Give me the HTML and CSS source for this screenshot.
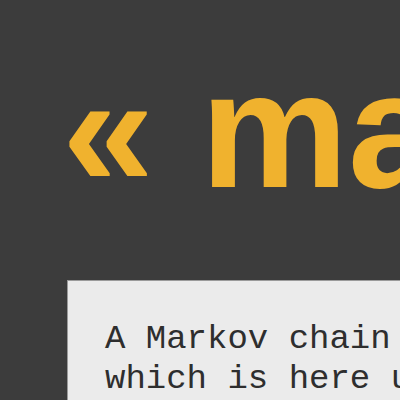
FILE: index.html
```html
<!DOCTYPE html>
<html lang="en">
<head>
<meta charset="utf-8">
<title>markov</title>
<link rel="stylesheet" href="styles.css">
</head>
<body>
<main class="page">
  <h1 class="title">&laquo; markov</h1>
  <section class="card">
    <p class="intro">A Markov chain is a random process<br>which is here used to generate text.</p>
  </section>
</main>
</body>
</html>
```
FILE: styles.css
```css
html, body {
  margin: 0;
  padding: 0;
  background: #3c3c3c;
  overflow: hidden;
}
.page {
  width: 1000px;
  padding: 47px 0 0 62px;
}
.title {
  margin: 0 0 67px 0;
  font-family: "Liberation Sans", Arial, sans-serif;
  font-weight: bold;
  font-size: 166px;
  line-height: 1;
  color: #f0b22e;
  white-space: nowrap;
}
.card {
  margin-left: 5px;
  background: #ebebeb;
  border: 1px solid #9a9a9a;
  padding: 38px 37px;
}
.intro {
  margin: 0;
  font-family: "Liberation Mono", "Courier New", monospace;
  font-size: 34px;
  line-height: 40px;
  color: #2e2e2e;
  white-space: nowrap;
}
```
